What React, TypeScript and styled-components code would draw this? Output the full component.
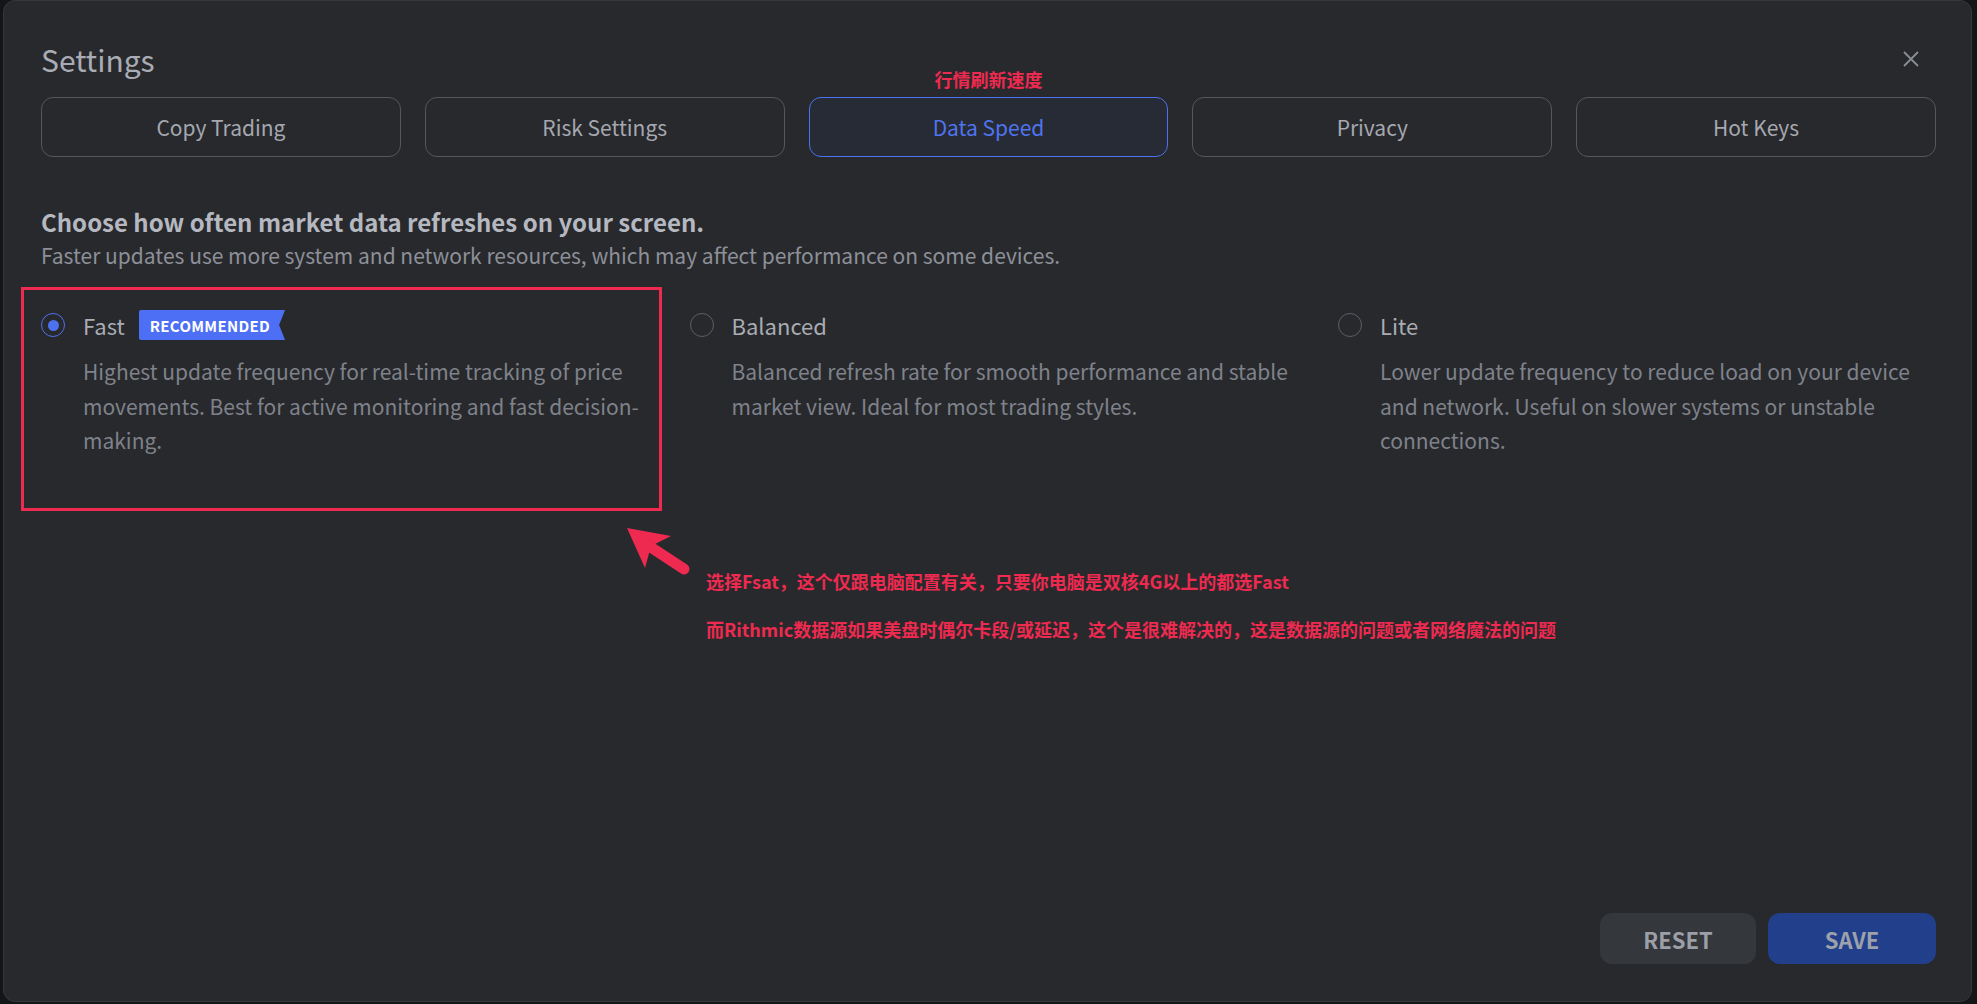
import styled, { createGlobalStyle } from "styled-components"
import { useState } from "react"

const GlobalStyle = createGlobalStyle`
    html, body {
        margin: 0;
        padding: 0;
        background: #141517;
    }
    * {
        box-sizing: border-box;
    }
`

const FONT = `"Noto Sans CJK SC", "Noto Sans", sans-serif`
const RED = "#ee2a50"

const Page = styled.div`
    width: 1977px;
    height: 1004px;
    padding: 0 5px 2px 3px;
    font-family: ${FONT};
`

const Dialog = styled.div`
    position: relative;
    display: flex;
    flex-direction: column;
    height: 1002px;
    padding: 38px 35px 37px 37px;
    background: #28292c;
    border: 1px solid #36373b;
    border-radius: 12px;
`

const Header = styled.div`
    display: flex;
    align-items: center;
    justify-content: space-between;
    height: 40px;
`

const Title = styled.h1`
    margin: 0;
    font-size: 30px;
    font-weight: 400;
    line-height: 40px;
    color: #a9acb4;
`

const CloseButton = styled.button`
    display: flex;
    align-items: center;
    justify-content: center;
    width: 28px;
    height: 28px;
    margin-right: 11px;
    padding: 0;
    background: none;
    border: none;
    color: #8a8d95;
    cursor: pointer;
`

const Tabs = styled.div`
    display: grid;
    grid-template-columns: repeat(5, 1fr);
    gap: 24px;
    margin-top: 18px;
`

const Tab = styled.button<{ $active?: boolean }>`
    position: relative;
    height: 60px;
    border-radius: 12px;
    font-family: ${FONT};
    font-size: 21px;
    cursor: pointer;
    border: 1px solid ${(p) => (p.$active ? "#4d72f0" : "#55575d")};
    background: ${(p) => (p.$active ? "#272b35" : "transparent")};
    color: ${(p) => (p.$active ? "#4f74ee" : "#a5a8b0")};
`

const TabNote = styled.span`
    position: absolute;
    left: 0;
    right: 0;
    bottom: calc(100% + 8px);
    font-size: 18px;
    font-weight: 700;
    line-height: 22px;
    color: ${RED};
`

const Heading = styled.h2`
    margin: 49px 0 0;
    font-size: 24px;
    font-weight: 700;
    line-height: 32px;
    color: #b5b8c0;
`

const SubText = styled.p`
    margin: 2px 0 0;
    font-size: 21px;
    line-height: 30px;
    color: #8d9099;
`

const Options = styled.div`
    display: grid;
    grid-template-columns: repeat(3, 600px);
    column-gap: 48.5px;
    align-items: start;
    margin-top: 39px;
`

const Option = styled.label`
    position: relative;
    display: grid;
    grid-template-columns: 24px 1fr;
    column-gap: 18px;
    align-items: center;
    align-content: start;
    cursor: pointer;
`

const Radio = styled.span<{ $checked?: boolean }>`
    display: flex;
    align-items: center;
    justify-content: center;
    width: 24px;
    height: 24px;
    border-radius: 50%;
    border: ${(p) => (p.$checked ? "1.5px solid #4d72f0" : "1px solid #5c5f66")};

    &::after {
        content: "";
        display: ${(p) => (p.$checked ? "block" : "none")};
        width: 11px;
        height: 11px;
        border-radius: 50%;
        background: #4d72f0;
    }
`

const OptionHead = styled.div`
    display: flex;
    align-items: center;
    gap: 14px;
    height: 32px;
`

const OptionName = styled.span`
    font-size: 22px;
    color: #a9acb4;
`

const Badge = styled.span`
    display: inline-flex;
    align-items: center;
    height: 30px;
    padding: 0 15px 0 11px;
    background: #4d6ff5;
    border-radius: 2px 0 0 2px;
    clip-path: polygon(0 0, 100% 0, calc(100% - 6px) 50%, 100% 100%, 0 100%);
    font-size: 15px;
    font-weight: 700;
    letter-spacing: 0.3px;
    color: #ffffff;
`

const OptionText = styled.p`
    grid-column: 2;
    margin: 13px 0 0;
    font-size: 21px;
    line-height: 34.7px;
    color: #7f828b;
`

const HighlightBox = styled.span`
    position: absolute;
    top: -22px;
    left: -20px;
    width: 641px;
    height: 224px;
    border: 3px solid ${RED};
    pointer-events: none;
`

const Arrow = styled.svg`
    position: absolute;
    left: 617px;
    top: 520px;
`

const Note = styled.div`
    position: absolute;
    left: 702px;
    top: 556px;
    font-size: 18px;
    font-weight: 700;
    line-height: 48px;
    color: ${RED};
    white-space: nowrap;
`

const Footer = styled.div`
    display: flex;
    justify-content: flex-end;
    gap: 12px;
    margin-top: auto;
`

const ActionButton = styled.button<{ $primary?: boolean }>`
    height: 51px;
    width: ${(p) => (p.$primary ? "168px" : "156px")};
    border: none;
    border-radius: 12px;
    font-family: ${FONT};
    font-size: 22px;
    font-weight: 700;
    cursor: pointer;
    background: ${(p) => (p.$primary ? "#213f8b" : "#34373b")};
    color: ${(p) => (p.$primary ? "#9ca1ac" : "#9c9fa8")};
`

const tabs = ["Copy Trading", "Risk Settings", "Data Speed", "Privacy", "Hot Keys"]

const speeds = [
    {
        id: "fast",
        name: "Fast",
        recommended: true,
        text: "Highest update frequency for real-time tracking of price movements. Best for active monitoring and fast decision-making.",
    },
    {
        id: "balanced",
        name: "Balanced",
        text: "Balanced refresh rate for smooth performance and stable market view. Ideal for most trading styles.",
    },
    {
        id: "lite",
        name: "Lite",
        text: "Lower update frequency to reduce load on your device and network. Useful on slower systems or unstable connections.",
    },
]

export default function App() {
    const [speed, setSpeed] = useState("fast")

    return (
        <>
            <GlobalStyle />
            <Page>
                <Dialog>
                    <Header>
                        <Title>Settings</Title>
                        <CloseButton aria-label="close">
                            <svg width="16" height="16" viewBox="0 0 16 16">
                                <path d="M1 1 L15 15 M15 1 L1 15" stroke="currentColor" strokeWidth="1.8" />
                            </svg>
                        </CloseButton>
                    </Header>

                    <Tabs>
                        {tabs.map((t) => (
                            <Tab key={t} $active={t === "Data Speed"}>
                                {t === "Data Speed" && <TabNote>行情刷新速度</TabNote>}
                                {t}
                            </Tab>
                        ))}
                    </Tabs>

                    <Heading>Choose how often market data refreshes on your screen.</Heading>
                    <SubText>
                        Faster updates use more system and network resources, which may affect performance on some devices.
                    </SubText>

                    <Options>
                        {speeds.map((s) => (
                            <Option key={s.id} onClick={() => setSpeed(s.id)}>
                                {s.id === "fast" && <HighlightBox />}
                                <Radio $checked={speed === s.id} />
                                <OptionHead>
                                    <OptionName>{s.name}</OptionName>
                                    {s.recommended && <Badge>RECOMMENDED</Badge>}
                                </OptionHead>
                                <OptionText>{s.text}</OptionText>
                            </Option>
                        ))}
                    </Options>

                    {/* pointer + notes about picking Fast */}
                    <Arrow width="72" height="60" viewBox="0 0 72 60">
                        <polygon points="6,7 50,15 30,25 24,47" fill={RED} />
                        <line x1="28" y1="25" x2="63" y2="48" stroke={RED} strokeWidth="11" strokeLinecap="round" />
                    </Arrow>
                    <Note>
                        <div>选择Fsat，这个仅跟电脑配置有关，只要你电脑是双核4G以上的都选Fast</div>
                        <div>而Rithmic数据源如果美盘时偶尔卡段/或延迟，这个是很难解决的，这是数据源的问题或者网络魔法的问题</div>
                    </Note>

                    <Footer>
                        <ActionButton>RESET</ActionButton>
                        <ActionButton $primary>SAVE</ActionButton>
                    </Footer>
                </Dialog>
            </Page>
        </>
    )
}
